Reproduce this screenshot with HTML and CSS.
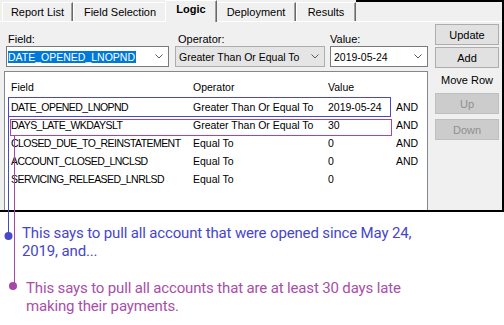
FILE: index.html
```html
<!DOCTYPE html>
<html lang="en">
<head>
  <meta charset="UTF-8">
  <title>Logic</title>
  <link rel="stylesheet" href="styles.css">
</head>
<body>
  <div class="window">
    <div class="tabs">
      <div class="tab tab-report">Report List</div>
      <div class="tab tab-fields">Field Selection</div>
      <div class="tab tab-logic active">Logic</div>
      <div class="tab tab-deploy">Deployment</div>
      <div class="tab tab-results">Results</div>
      <div class="tab-filler"></div>
    </div>
    <div class="panel">
      <div class="main">
        <div class="criteria">
          <div class="crit crit-field">
            <label>Field:</label>
            <div class="combo">
              <span class="combo-text"><span class="sel">DATE_OPENED_LNOPND</span></span>
              <svg class="chev" width="8" height="5" viewBox="0 0 8 5"><polyline points="0.5,0.5 4,4 7.5,0.5" /></svg>
            </div>
          </div>
          <div class="crit crit-op">
            <label>Operator:</label>
            <div class="combo combo-list">
              <span class="combo-text">Greater Than Or Equal To</span>
              <svg class="chev" width="8" height="5" viewBox="0 0 8 5"><polyline points="0.5,0.5 4,4 7.5,0.5" /></svg>
            </div>
          </div>
          <div class="crit crit-value">
            <label>Value:</label>
            <div class="combo">
              <span class="combo-text">2019-05-24</span>
              <svg class="chev" width="8" height="5" viewBox="0 0 8 5"><polyline points="0.5,0.5 4,4 7.5,0.5" /></svg>
            </div>
          </div>
        </div>
        <div class="grid">
          <div class="row head">
            <span>Field</span><span>Operator</span><span>Value</span><span></span>
          </div>
          <div class="row">
            <span class="fname">DATE_OPENED_LNOPND</span><span>Greater Than Or Equal To</span><span>2019-05-24</span><span>AND</span>
          </div>
          <div class="row">
            <span class="fname">DAYS_LATE_WKDAYSLT</span><span>Greater Than Or Equal To</span><span>30</span><span>AND</span>
          </div>
          <div class="row">
            <span class="fname">CLOSED_DUE_TO_REINSTATEMENT</span><span>Equal To</span><span>0</span><span>AND</span>
          </div>
          <div class="row">
            <span class="fname">ACCOUNT_CLOSED_LNCLSD</span><span>Equal To</span><span>0</span><span>AND</span>
          </div>
          <div class="row">
            <span class="fname">SERVICING_RELEASED_LNRLSD</span><span>Equal To</span><span>0</span><span></span>
          </div>
        </div>
      </div>
      <div class="side">
        <button class="btn btn-update">Update</button>
        <button class="btn btn-add">Add</button>
        <div class="move-label">Move Row</div>
        <button class="btn btn-up" disabled>Up</button>
        <button class="btn btn-down" disabled>Down</button>
      </div>
    </div>
  </div>

  <p class="note note-blue">This says to pull all account that were opened since May 24, 2019, and...</p>
  <p class="note note-purple">This says to pull all accounts that are at least 30 days late making their payments.</p>

  <svg class="callouts" width="504" height="325">
    <rect x="8.5" y="97.5" width="382" height="19" fill="none" stroke="#4848c8" />
    <rect x="10.5" y="119.5" width="381" height="16" fill="none" stroke="#a548a5" />
    <line x1="8.5" y1="116.5" x2="8.5" y2="236" stroke="#4848c8" />
    <line x1="14.5" y1="135.5" x2="14.5" y2="286" stroke="#a548a5" />
    <circle cx="8.5" cy="236" r="4" fill="#4848c8" />
    <circle cx="13" cy="286" r="4" fill="#a548a5" />
  </svg>
</body>
</html>
```

FILE: styles.css
```css
body {
  margin: 0;
  width: 504px;
  height: 325px;
  background: #fff;
  font-family: "Liberation Sans", Arial, sans-serif;
  font-size: 11px;
  color: #000;
  position: relative;
  overflow: hidden;
}
.window {
  width: 504px;
  height: 212px;
  box-sizing: border-box;
  background: #f0f0f0;
  border-right: 2px solid #000;
  border-bottom: 2px solid #000;
  overflow: hidden;
}
.tabs {
  display: flex;
  align-items: flex-end;
  height: 21px;
}
.tab {
  height: 19px;
  box-sizing: border-box;
  border: 1px solid #fff;
  border-bottom: none;
  border-right-color: #696969;
  box-shadow: inset -1px 0 #a0a0a0;
  text-align: center;
  line-height: 18px;
  background: #f0f0f0;
}
.tab.active {
  height: 22px;
  margin: 0 -1px -1px -2px;
  font-weight: bold;
  line-height: 17px;
  position: relative;
  z-index: 1;
}
.tab-report { width: 71px; margin-left: 2px; }
.tab-fields { width: 94px; }
.tab-logic { width: 52px; }
.tab-deploy { width: 80px; }
.tab-results { width: 60px; }
.tab-filler {
  flex: 1;
  align-self: stretch;
  border-top: 2px solid #000;
}
.panel {
  display: flex;
  height: 189px;
  box-sizing: border-box;
  border-top: 1px solid #fff;
  padding-top: 1px;
}
.main {
  margin-left: 4px;
  width: 424px;
}
.criteria {
  display: flex;
  margin-top: 10px;
}
.crit label {
  display: block;
  height: 13px;
  line-height: 13px;
  padding-left: 2px;
}
.crit-field { margin-left: 2px; width: 163px; }
.crit-op { margin-left: 6px; width: 150px; }
.crit-op label { padding-left: 3px; }
.crit-value { margin-left: 5px; width: 98px; }
.crit-value label { padding-left: 0; }
.combo {
  display: flex;
  align-items: center;
  height: 21px;
  box-sizing: border-box;
  border: 1px solid #7a7a7a;
  background: #fff;
  padding: 0 5px 0 3px;
  font-size: 10.5px;
}
.combo-list {
  background: #e5e5e5;
  border-color: #adadad;
}
.crit-field .combo { padding-left: 1px; }
.combo-text {
  flex: 1;
  white-space: nowrap;
  overflow: hidden;
}
.sel {
  background: #0078d7;
  color: #fff;
  padding: 2px 1px 2px 0;
}
.chev polyline {
  fill: none;
  stroke: #5a5a5a;
  stroke-width: 1;
}
.grid {
  margin-top: 4px;
  height: 140px;
  box-sizing: border-box;
  border: 1px solid #828790;
  background: #fff;
  padding-top: 6px;
  font-size: 10.5px;
}
.row {
  display: grid;
  grid-template-columns: 182px 135px 68px auto;
  padding-left: 6px;
  height: 18px;
  line-height: 18px;
  white-space: nowrap;
}
.row.head {
  margin-bottom: 2px;
}
.fname {
  letter-spacing: -0.55px;
}
.side {
  margin-left: 7px;
  width: 64px;
  display: flex;
  flex-direction: column;
}
.btn {
  font: inherit;
  height: 21px;
  padding: 0;
  box-sizing: border-box;
  border: 1px solid #adadad;
  background: #e1e1e1;
  color: #000;
}
.btn-update { margin-top: 1px; }
.btn-add { margin-top: 2px; }
.move-label {
  margin-top: 6px;
  height: 13px;
  line-height: 13px;
  text-align: center;
}
.btn-up { margin-top: 6px; }
.btn-down { margin-top: 5px; }
.btn:disabled {
  background: #cccccc;
  border-color: #bfbfbf;
  color: #8f8f8f;
}
.note {
  font-family: Roboto, "Noto Sans", sans-serif;
  font-size: 15px;
  letter-spacing: -0.15px;
  line-height: 18px;
  margin: 0;
  width: 410px;
}
.note-blue {
  margin: 12px 0 0 22px;
  color: #4646cc;
}
.note-purple {
  margin: 19px 0 0 26px;
  color: #a84ea8;
}
.callouts {
  position: absolute;
  top: 0;
  left: 0;
  pointer-events: none;
}
```
